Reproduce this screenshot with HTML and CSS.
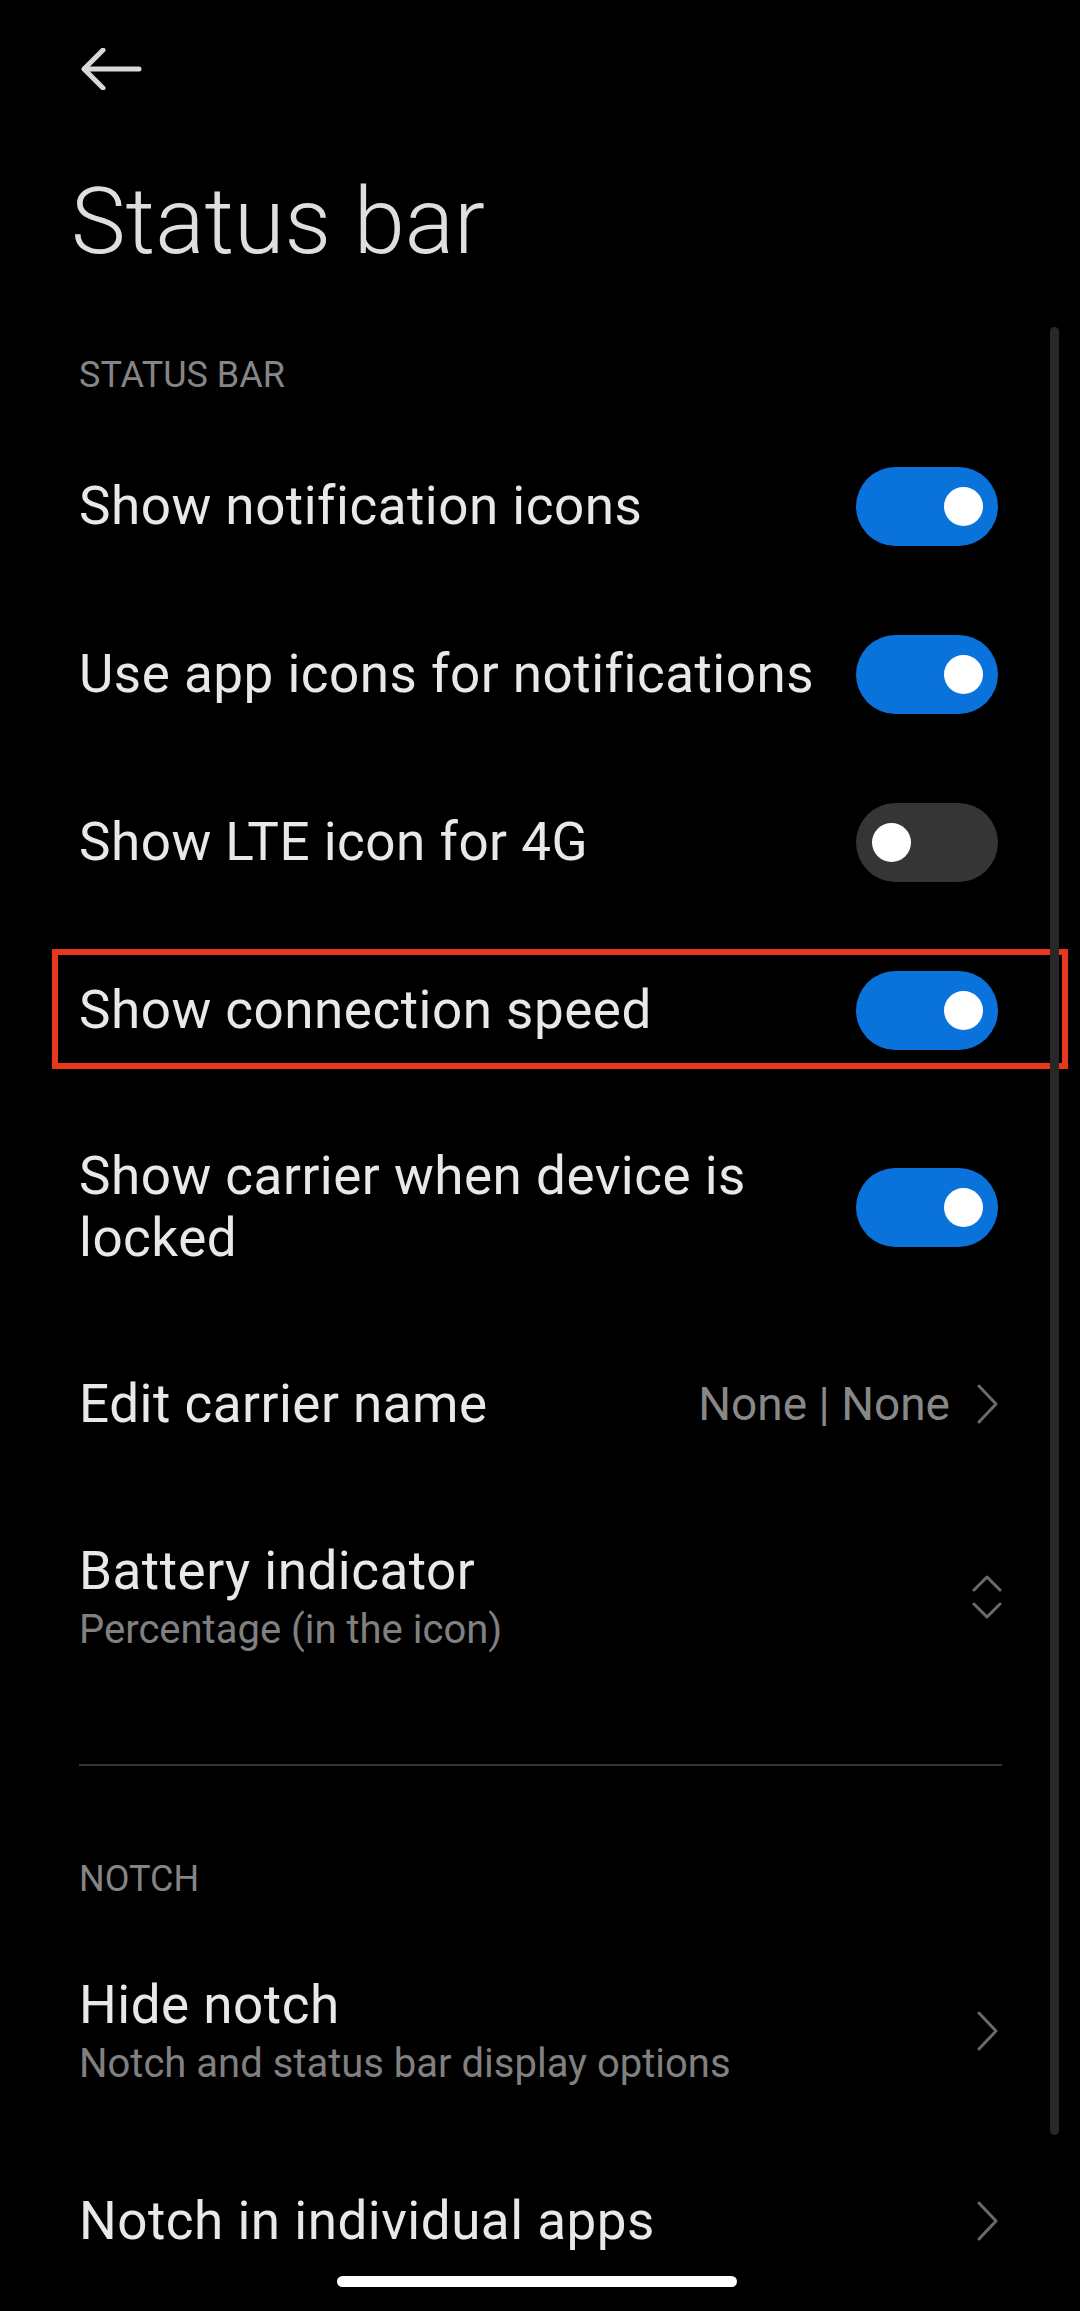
FILE: index.html
```html
<!DOCTYPE html>
<html lang="en">
<head>
    <meta charset="UTF-8">
    <meta name="viewport" content="width=device-width, initial-scale=1.0">
    <title>Status bar</title>
    <link rel="stylesheet" href="styles.css">
</head>
<body>
<div class="screen">
    <header class="topbar">
        <svg class="back" viewBox="0 0 62 42" width="62" height="42">
            <path d="M3 21 H58 M22 2 L3 21 L22 40" fill="none" stroke="#d8d8d8" stroke-width="5" stroke-linecap="round" stroke-linejoin="round"/>
        </svg>
    </header>

    <h1 class="title">Status bar</h1>

    <section class="group">
        <div class="group-label">STATUS BAR</div>

        <div class="row">
            <span class="row-text">Show notification icons</span>
            <span class="switch on"></span>
        </div>
        <div class="row">
            <span class="row-text">Use app icons for notifications</span>
            <span class="switch on"></span>
        </div>
        <div class="row">
            <span class="row-text">Show LTE icon for 4G</span>
            <span class="switch"></span>
        </div>
        <div class="row">
            <span class="mark"></span>
            <span class="row-text">Show connection speed</span>
            <span class="switch on"></span>
        </div>
        <div class="row">
            <span class="row-text wrap">Show carrier when device is locked</span>
            <span class="switch on"></span>
        </div>
        <div class="row">
            <span class="row-text">Edit carrier name</span>
            <span class="value">
                None | None
                <svg class="chev" viewBox="0 0 24 40" width="24" height="40">
                    <path d="M3 2 L20 20 L3 38" fill="none" stroke="#6a6a6a" stroke-width="3" stroke-linecap="round" stroke-linejoin="round"/>
                </svg>
            </span>
        </div>
        <div class="row two">
            <div class="row-text">
                <div>Battery indicator</div>
                <div class="sub">Percentage (in the icon)</div>
            </div>
            <svg class="updown" viewBox="0 0 30 44" width="30" height="44">
                <path d="M2 15 L15 2 L28 15 M2 29 L15 42 L28 29" fill="none" stroke="#6a6a6a" stroke-width="3" stroke-linecap="round" stroke-linejoin="round"/>
            </svg>
        </div>
    </section>

    <hr class="divider">

    <section class="group notch">
        <div class="group-label">NOTCH</div>

        <div class="row two">
            <div class="row-text">
                <div>Hide notch</div>
                <div class="sub">Notch and status bar display options</div>
            </div>
            <svg class="chev" viewBox="0 0 24 40" width="24" height="40">
                <path d="M3 2 L20 20 L3 38" fill="none" stroke="#6a6a6a" stroke-width="3" stroke-linecap="round" stroke-linejoin="round"/>
            </svg>
        </div>
        <div class="row">
            <span class="row-text">Notch in individual apps</span>
            <svg class="chev" viewBox="0 0 24 40" width="24" height="40">
                <path d="M3 2 L20 20 L3 38" fill="none" stroke="#6a6a6a" stroke-width="3" stroke-linecap="round" stroke-linejoin="round"/>
            </svg>
        </div>
    </section>

    <div class="scrollbar"></div>
    <div class="home-bar"></div>
</div>
</body>
</html>
```

FILE: styles.css
```css
* {
    box-sizing: border-box;
}
body {
    margin: 0;
    background-color: #000000;
    font-family: Roboto, "Noto Sans", sans-serif;
    color: #e8e8e8;
}
.screen {
    position: relative;
    width: 1080px;
    height: 2311px;
    overflow: hidden;
}
.topbar {
    height: 88px;
    padding: 48px 0 0 81px;
}
.back {
    display: block;
}
.title {
    margin: 79px 0 0 71px;
    font-size: 92px;
    font-weight: 300;
    line-height: 110px;
    color: #dedede;
}
.group {
    padding: 0 82px 0 79px;
}
.group-label {
    margin-top: 73px;
    margin-bottom: 22px;
    font-size: 36px;
    line-height: 50px;
    color: #858585;
}
.notch .group-label {
    margin-top: 88px;
    margin-bottom: 18px;
}
.row {
    position: relative;
    display: flex;
    align-items: center;
    justify-content: space-between;
    padding: 51px 0;
}
.row.two {
    padding: 50px 0 47px;
}
.row-text {
    flex: 1;
    padding-right: 20px;
    font-size: 53px;
    letter-spacing: 0.5px;
    line-height: 66px;
}
.row-text.wrap {
    line-height: 62px;
}
.sub {
    font-size: 40px;
    letter-spacing: 0;
    line-height: 52px;
    color: #808080;
}
.value {
    display: flex;
    align-items: center;
    gap: 26px;
    font-size: 46px;
    color: #888888;
    white-space: nowrap;
}
.chev {
    display: block;
    flex-shrink: 0;
    margin-right: -2px;
}
.updown {
    display: block;
    flex-shrink: 0;
    margin-right: -4px;
}
/* toggle switch, negative margin keeps it inside the text line height */
.switch {
    position: relative;
    flex-shrink: 0;
    width: 142px;
    height: 79px;
    margin: -7px 0;
    border-radius: 40px;
    background-color: #353535;
}
.switch::after {
    content: "";
    position: absolute;
    top: 20px;
    left: 16px;
    width: 39px;
    height: 39px;
    border-radius: 50%;
    background-color: #ffffff;
}
.switch.on {
    background-color: #0a72db;
}
.switch.on::after {
    left: auto;
    right: 15px;
}
/* red highlight around a row */
.mark {
    position: absolute;
    top: 23px;
    bottom: 25px;
    left: -27px;
    right: -70px;
    border: 6px solid #e8381a;
    pointer-events: none;
}
.divider {
    height: 2px;
    margin: 61px 78px 0 79px;
    border: 0;
    background-color: #333333;
}
.scrollbar {
    position: absolute;
    top: 327px;
    left: 1050px;
    width: 9px;
    height: 1808px;
    border-radius: 5px;
    background-color: #282828;
}
.home-bar {
    position: absolute;
    top: 2276px;
    left: 337px;
    width: 400px;
    height: 11px;
    border-radius: 6px;
    background-color: #ffffff;
}
```
